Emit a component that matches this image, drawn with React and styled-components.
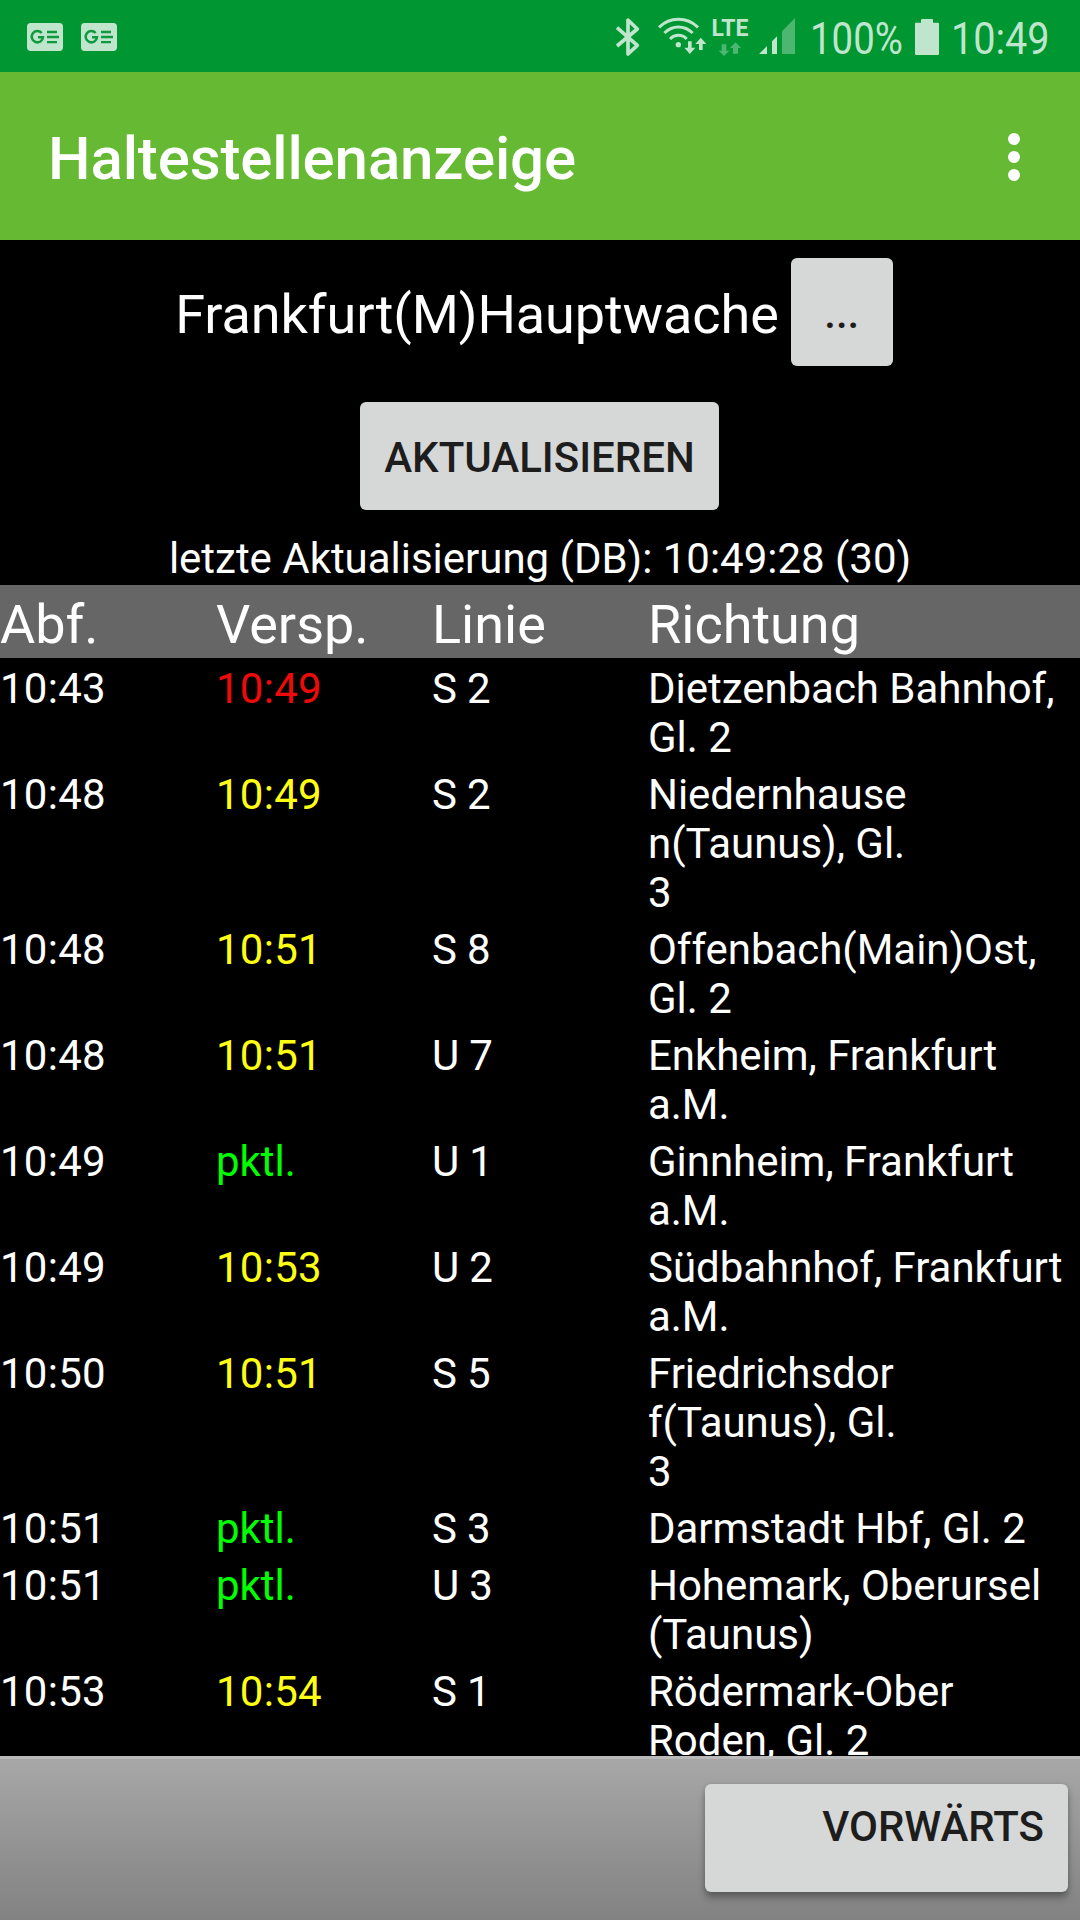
import React from "react";
import styled, { createGlobalStyle } from "styled-components";

const GlobalStyle = createGlobalStyle`
  * { box-sizing: border-box; }
  body { margin: 0; background: #000; }
`;

const Screen = styled.div`
  width: 1080px;
  height: 1920px;
  display: flex;
  flex-direction: column;
  overflow: hidden;
  background: #000;
  color: #fff;
  font-family: Roboto, "Liberation Sans", sans-serif;
  font-size: 42px;
  line-height: 49px;
`;

const StatusBar = styled.header`
  flex: none;
  height: 72px;
  display: flex;
  justify-content: space-between;
  padding: 15px 32px 0 27px;
  background: #009632;
  color: #bfe5cc;
`;

const Notifications = styled.div`
  display: flex;
  gap: 18px;
  padding-top: 8px;
`;

const StatusIcons = styled.div`
  display: flex;
  align-items: flex-start;
`;

const Icon = styled.svg`
  flex: none;
  display: block;
  margin-right: ${(p) => p.$after || 0}px;
`;

const Network = styled.div`
  width: 38px;
  height: 42px;
  margin-right: 10px;
  display: flex;
  flex-direction: column;
  align-items: center;
`;

const NetworkLabel = styled.span`
  font-size: 23px;
  line-height: 27px;
  font-weight: 700;
  white-space: nowrap;
`;

const StatusText = styled.span`
  width: ${(p) => p.$width}px;
  margin-right: ${(p) => p.$after || 0}px;
  font-size: 44px;
  line-height: 48px;
  white-space: nowrap;
  transform: scaleX(${(p) => p.$squeeze});
  transform-origin: 0 50%;
`;

const AppBar = styled.div`
  flex: none;
  height: 168px;
  display: flex;
  align-items: center;
  justify-content: space-between;
  padding: 0 60px 0 48px;
  background: #66b933;
`;

const Title = styled.h1`
  margin: 5px 0 0;
  font-size: 60px;
  line-height: 70px;
  font-weight: 500;
  letter-spacing: -0.13px;
`;

const Overflow = styled.button`
  display: flex;
  flex-direction: column;
  gap: 6px;
  margin-top: 1px;
  padding: 0;
  border: 0;
  background: none;
`;

const Dot = styled.span`
  width: 12px;
  height: 12px;
  border-radius: 50%;
  background: #fff;
`;

const Stop = styled.section`
  flex: none;
  height: 345px;
  display: flex;
  flex-direction: column;
  align-items: center;
  padding-top: 18px;
`;

const StopRow = styled.div`
  display: flex;
  margin-left: -12px;
`;

const StopName = styled.div`
  margin-right: 12px;
  padding-top: 25px;
  font-size: 54px;
  line-height: 63px;
  letter-spacing: -0.09px;
`;

const Button = styled.button`
  width: ${(p) => p.$width}px;
  height: 108px;
  padding: ${(p) => p.$pad || "3px 0 0"};
  display: flex;
  align-items: ${(p) => (p.$raised ? "flex-start" : "center")};
  justify-content: ${(p) => (p.$raised ? "flex-end" : "center")};
  border: 0;
  border-radius: 6px;
  background: #d6d7d7;
  color: #1d1d1d;
  font: 500 42px/49px Roboto, "Liberation Sans", sans-serif;
  box-shadow: ${(p) => (p.$raised ? "0 6px 7px rgba(0,0,0,.27), 0 1px 5px rgba(0,0,0,.15)" : "none")};
`;

const Refresh = styled.div`
  margin: 36px 1px 0 0;
`;

const Updated = styled.div`
  margin-top: 24px;
  white-space: nowrap;
  letter-spacing: -0.02px;
`;

const Row = styled.div`
  flex: none;
  display: grid;
  grid-template-columns: 216px 216px 216px 1fr;
  padding: 6px 0 2px;
`;

const HeadRow = styled(Row)`
  padding: 8px 0 2px;
  background: #666;
  font-size: 54px;
  line-height: 63px;
`;

const colors = { late: "#ee0a0a", delayed: "#ffff14", ok: "#00ff00" };

const Cell = styled.div`
  color: ${(p) => colors[p.$state] || "inherit"};
  letter-spacing: ${(p) => p.$spacing || 0}px;
  white-space: pre;
`;

const Board = styled.main`
  flex: 1;
  min-height: 0;
  display: flex;
  flex-direction: column;
  overflow: hidden;
`;

const Footer = styled.footer`
  flex: none;
  height: 164px;
  display: flex;
  justify-content: flex-end;
  padding: 25px 12px 0 0;
  border-top: 3px solid #b9b9b9;
  background: linear-gradient(#a7a7a7, #828282);
`;

const departures = [
  ["10:43", "10:49", "late", "S 2", "Dietzenbach Bahnhof,\nGl. 2"],
  ["10:48", "10:49", "delayed", "S 2", "Niedernhause\nn(Taunus), Gl.\n3"],
  ["10:48", "10:51", "delayed", "S 8", "Offenbach(Main)Ost,\nGl. 2"],
  ["10:48", "10:51", "delayed", "U 7", "Enkheim, Frankfurt\na.M."],
  ["10:49", "pktl.", "ok", "U 1", "Ginnheim, Frankfurt\na.M."],
  ["10:49", "10:53", "delayed", "U 2", "Südbahnhof, Frankfurt\na.M."],
  ["10:50", "10:51", "delayed", "S 5", "Friedrichsdor\nf(Taunus), Gl.\n3"],
  ["10:51", "pktl.", "ok", "S 3", "Darmstadt Hbf, Gl. 2"],
  ["10:51", "pktl.", "ok", "U 3", "Hohemark, Oberursel\n(Taunus)"],
  ["10:53", "10:54", "delayed", "S 1", "Rödermark-Ober\nRoden, Gl. 2"],
];

const NewsIcon = () => (
  <Icon width="36" height="28" viewBox="0 0 108 84">
    <rect width="108" height="84" rx="11" fill="#bfe5cc" />
    <g fill="none" stroke="#109a40" strokeWidth="7.5">
      <path d="M44 30 A17 17 0 1 0 48 42.500 H33" />
      <path d="M60 27 H90 M60 42 H96 M60 57.500 H90" strokeWidth="7" />
    </g>
  </Icon>
);

const BluetoothIcon = () => (
  <Icon $after={16} width="26" height="42" viewBox="45 45 78 126">
    <path
      d="M51 83 L112 136 L84 162 V60 L112 87 L51 138"
      fill="none"
      stroke="currentColor"
      strokeWidth="11"
      strokeLinejoin="round"
    />
  </Icon>
);

const WifiIcon = () => (
  <Icon $after={4} width="50" height="42" viewBox="171 45 150 126">
    <g fill="none" stroke="currentColor" strokeWidth="9">
      <path d="M177 82 Q202 58 235 58 Q269 58 294 82" />
      <path d="M193 99 Q212 81 235 81 Q259 81 278 99" />
      <path d="M210 117 Q221 106 235 106 Q250 106 260 117" />
    </g>
    <circle cx="235" cy="134" r="8" fill="currentColor" />
    <path d="M264 124 h11 v19 h11 l-16.500 19 l-16.500 -19 h11z M297 150 h11 v-18 h11 l-16.500 -19 l-16.500 19 h11z" fill="currentColor" />
  </Icon>
);

const TrafficIcon = () => (
  <Icon width="24" height="14" viewBox="356 121 72 42">
    <path d="M367 128 h14 v19 h9 l-16 16 l-16 -16 h9z M401 156 h15 v-17 h9 l-16.500 -17 l-16.500 17 h9z" fill="#4db670" />
  </Icon>
);

const SignalIcon = () => (
  <Icon $after={14} width="37" height="42" viewBox="477 45 111 126">
    <path d="M477 162 L501 138 V162z M516 162 V124 L531 109 V162z" fill="currentColor" />
    <path d="M546 162 V94 L585 54 V162z" fill="#4db670" />
  </Icon>
);

const BatteryIcon = () => (
  <Icon $after={12} width="24" height="42" viewBox="0 0 72 126">
    <path d="M3 23 H18 V15 Q18 12 21 12 H51 Q54 12 54 15 V23 H69 Q72 23 72 26 V117 Q72 120 69 120 H3 Q0 120 0 117 V26 Q0 23 3 23z" fill="currentColor" />
  </Icon>
);

export default function App() {
  return (
    <Screen>
      <GlobalStyle />
      <StatusBar>
        <Notifications>
          <NewsIcon />
          <NewsIcon />
        </Notifications>
        <StatusIcons>
          <BluetoothIcon />
          <WifiIcon />
          <Network>
            <NetworkLabel>LTE</NetworkLabel>
            <TrafficIcon />
          </Network>
          <SignalIcon />
          <StatusText $width={91} $after={14} $squeeze={0.872}>100%</StatusText>
          <BatteryIcon />
          <StatusText $width={97} $squeeze={0.9}>10:49</StatusText>
        </StatusIcons>
      </StatusBar>
      <AppBar>
        <Title>Haltestellenanzeige</Title>
        <Overflow aria-label="Menü">
          <Dot />
          <Dot />
          <Dot />
        </Overflow>
      </AppBar>
      <Stop>
        <StopRow>
          <StopName>Frankfurt(M)Hauptwache</StopName>
          <Button $width={102}>...</Button>
        </StopRow>
        <Refresh>
          <Button $width={359}>AKTUALISIEREN</Button>
        </Refresh>
        <Updated>letzte Aktualisierung (DB): 10:49:28 (30)</Updated>
      </Stop>
      <Board>
        <HeadRow>
          <Cell>Abf.</Cell>
          <Cell>Versp.</Cell>
          <Cell>Linie</Cell>
          <Cell>Richtung</Cell>
        </HeadRow>
        {departures.map(([time, actual, state, line, target], i) => (
          <Row key={i}>
            <Cell $spacing={0.25}>{time}</Cell>
            <Cell $spacing={state === "ok" ? 0 : 0.25} $state={state}>{actual}</Cell>
            <Cell $spacing={-0.2}>{line}</Cell>
            <Cell $spacing={-0.03}>{target}</Cell>
          </Row>
        ))}
      </Board>
      <Footer>
        <Button $raised $width={363} $pad="18px 24px 0 0">VORWÄRTS</Button>
      </Footer>
    </Screen>
  );
}
